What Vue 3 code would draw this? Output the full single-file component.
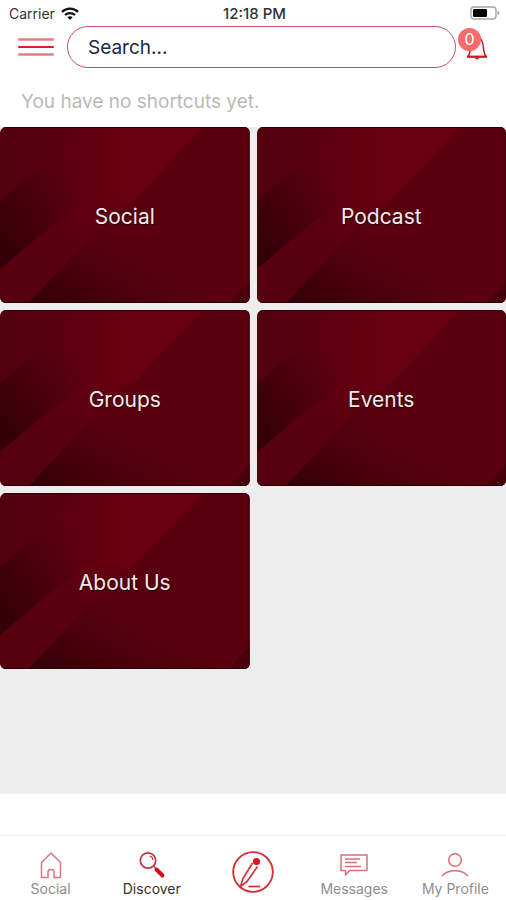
<script setup>
import { ref } from 'vue'

const query = ref('')
const tiles = ['Social', 'Podcast', 'Groups', 'Events', 'About Us']
</script>

<template>
  <div class="page">
    <div class="status">
      <span class="carrier">
        Carrier
        <svg class="wifi" viewBox="0 0 18 13" aria-hidden="true">
          <g fill="none" stroke="#111" stroke-width="2.3">
            <path d="M1 4.9C5.4.6 12.6.6 17 4.9" />
            <path d="M4 8c2.8-2.6 7.2-2.6 10 0" />
          </g>
          <path d="M6.4 10.2c1.5-1.3 3.7-1.3 5.2 0L9 13z" fill="#111" />
        </svg>
      </span>
      <span class="clock">12:18 PM</span>
      <svg class="battery" viewBox="0 0 30 14" aria-hidden="true">
        <rect x="1" y="1" width="25" height="12" rx="3" fill="#fff" stroke="#a5a5a5" stroke-width="1.4" />
        <rect x="3" y="3" width="14" height="8" rx="1" fill="#000" />
        <path d="M27.5 4.5c2.4.8 2.4 4.2 0 5z" fill="#a5a5a5" />
      </svg>
    </div>

    <header class="header">
      <button class="menu" type="button" aria-label="Menu">
        <svg viewBox="0 0 36 20" aria-hidden="true">
          <path d="M1 2.500h34M1 17.500h34" stroke="#df7f86" stroke-width="2.300" stroke-linecap="round" />
          <path d="M1 10h34" stroke="#d3232c" stroke-width="2" stroke-linecap="round" />
        </svg>
      </button>
      <input v-model="query" class="search" type="text" placeholder="Search..." aria-label="Search" />
      <button class="alerts" type="button" aria-label="Notifications">
        <svg viewBox="0 0 24 28" aria-hidden="true">
          <path d="M3 23.500h18c-1.500-2-2-4-2.500-8C18 8.500 16 4 12 4S6 8.500 5.500 15.500c-.5 4-1 6-2.500 8z" fill="none" stroke="#cc1822" stroke-width="1.500" stroke-linejoin="round" />
          <path d="M2 23.800h20" stroke="#cc1822" stroke-width="2" />
          <path d="M10 24.500h4c0 2.500-4 2.500-4 0z" fill="#cc1822" />
        </svg>
        <span class="badge">0</span>
      </button>
    </header>

    <p class="hint">You have no shortcuts yet.</p>

    <svg class="defs" width="0" height="0" aria-hidden="true">
      <defs>
        <linearGradient id="tile-base" x1="0" y1="0" x2="1" y2="0">
          <stop offset="0" stop-color="#52000e" />
          <stop offset="0.3" stop-color="#5c000f" />
          <stop offset="1" stop-color="#5c000e" />
        </linearGradient>
        <linearGradient id="tile-shade" gradientUnits="userSpaceOnUse" x1="0" y1="105" x2="78" y2="55">
          <stop offset="0" stop-color="#360009" />
          <stop offset="0.4" stop-color="#46000c" />
          <stop offset="1" stop-color="#5c000f" />
        </linearGradient>
        <linearGradient id="tile-beam" gradientUnits="userSpaceOnUse" x1="0" y1="176" x2="170" y2="0">
          <stop offset="0" stop-color="#54000e" />
          <stop offset="0.45" stop-color="#5c000f" />
          <stop offset="0.8" stop-color="#6a0011" />
          <stop offset="1" stop-color="#640010" />
        </linearGradient>
        <linearGradient id="tile-glow" gradientUnits="userSpaceOnUse" x1="60" y1="60" x2="130" y2="60">
          <stop offset="0" stop-color="#680010" stop-opacity="0" />
          <stop offset="1" stop-color="#680010" />
        </linearGradient>
        <linearGradient id="tile-fold" gradientUnits="userSpaceOnUse" x1="45" y1="185" x2="95" y2="95">
          <stop offset="0" stop-color="#300007" />
          <stop offset="0.45" stop-color="#48000b" />
          <stop offset="1" stop-color="#5b000e" />
        </linearGradient>
      </defs>
    </svg>

    <main class="board">
      <nav class="tiles" aria-label="Sections">
        <a v-for="tile in tiles" :key="tile" class="tile" href="#">
          <svg class="art" viewBox="0 0 250 176" preserveAspectRatio="none" aria-hidden="true">
            <rect width="250" height="176" fill="url(#tile-base)" />
            <path d="M0 74L32 46L80 0H180L60 95L0 142z" fill="url(#tile-shade)" />
            <path d="M60 95V16L80 0H204L135 72z" fill="url(#tile-glow)" />
            <path d="M0 142L60 92L135 72L93 107L29 176H0z" fill="url(#tile-beam)" />
            <path d="M29 176L93 107L135 72L204 0H250V176z" fill="url(#tile-fold)" />
            <path d="M229 176L250 154V176z" fill="#4a000b" />
            <path d="M0 .5H250M0 175.500H250M249.500 0V176" stroke="#2c0007" stroke-width="1" />
          </svg>
          <span class="label">{{ tile }}</span>
        </a>
      </nav>
    </main>

    <nav class="tabs" aria-label="Main">
      <a class="tab" href="#">
        <svg viewBox="0 0 28 28" aria-hidden="true">
          <path d="M4.500 11.500L14 2l9.500 9.500V26.500H17v-5.500c0-3.500-6-3.500-6 0v5.500H4.500z" fill="none" stroke="#dc7680" stroke-width="1.500" stroke-linejoin="round" />
        </svg>
        <span>Social</span>
      </a>
      <a class="tab active" href="#" aria-current="page">
        <svg viewBox="0 0 28 28" aria-hidden="true">
          <circle cx="10" cy="9.500" r="7.700" fill="none" stroke="#c8323c" stroke-width="1.700" />
          <path d="M11.500 5c2 .4 3.200 2 3.200 4" fill="none" stroke="#c8323c" stroke-width="1.200" />
          <path d="M15.500 15l3 3" stroke="#c8323c" stroke-width="1.500" />
          <path d="M18.500 18.500l6 6" stroke="#cf101c" stroke-width="4" stroke-linecap="round" />
        </svg>
        <span>Discover</span>
      </a>
      <a class="tab compose" href="#" aria-label="Compose">
        <svg viewBox="0 0 42 42" aria-hidden="true">
          <circle cx="21" cy="21" r="19.800" fill="none" stroke="#d62a34" stroke-width="1.800" />
          <path d="M20.500 12L11 27.500L8.500 35.500L15 30.500L25.500 15.500" fill="none" stroke="#d3343e" stroke-width="1.700" stroke-linejoin="round" />
          <circle cx="24.500" cy="10.500" r="3.600" fill="#dc1420" />
          <path d="M16.500 35.500h11.500" stroke="#d62a34" stroke-width="1.700" />
        </svg>
      </a>
      <a class="tab" href="#">
        <svg viewBox="0 0 28 28" aria-hidden="true">
          <path d="M1 4h26v15.500H9.500L5.500 24v-4.500H1z" fill="none" stroke="#dc6e78" stroke-width="1.500" stroke-linejoin="round" />
          <path d="M5 8h15M5 11.500h12M5 15.500h16" stroke="#dc6e78" stroke-width="1.300" />
        </svg>
        <span>Messages</span>
      </a>
      <a class="tab" href="#">
        <svg viewBox="0 0 28 28" aria-hidden="true">
          <circle cx="14" cy="9" r="6.300" fill="none" stroke="#dc6e78" stroke-width="1.500" />
          <path d="M1 25C7.500 18 20.500 18 27 25" fill="none" stroke="#dc6e78" stroke-width="1.500" />
        </svg>
        <span>My Profile</span>
      </a>
    </nav>
  </div>
</template>

<style>
body {
  margin: 0;
  background: #fff;
}
</style>

<style scoped>
.page {
  display: flex;
  flex-direction: column;
  min-height: 100vh;
  font-family: Inter, "Liberation Sans", sans-serif;
  background: #fff;
}

.status {
  display: grid;
  grid-template-columns: 1fr auto 1fr;
  align-items: center;
  height: 26px;
  padding: 0 6px 0 9px;
  font-size: 14px;
  color: #333;
}

.carrier {
  display: flex;
  align-items: center;
  gap: 6px;
}

.wifi {
  width: 18px;
  height: 13px;
}

.clock {
  font-size: 15px;
  font-weight: 500;
}

.battery {
  justify-self: end;
  width: 30px;
  height: 14px;
}

.header {
  display: flex;
  align-items: center;
  gap: 13px;
  padding: 0 17px 0 18px;
}

.menu,
.alerts {
  flex: none;
  padding: 0;
  border: 0;
  background: none;
}

.menu svg {
  display: block;
  width: 36px;
  height: 20px;
}

.search {
  flex: 1;
  min-width: 0;
  height: 42px;
  box-sizing: border-box;
  padding: 0 20px;
  border: 1px solid #c9535d;
  border-radius: 21px;
  background: #fff;
  font-family: inherit;
  font-size: 19px;
  color: #1d2649;
}

.search::placeholder {
  color: #1d2649;
  opacity: 1;
}

.alerts {
  position: relative;
  margin-left: -4px;
}

.alerts svg {
  display: block;
  width: 24px;
  height: 28px;
}

.badge {
  position: absolute;
  top: -5px;
  left: -7px;
  width: 23px;
  height: 23px;
  border-radius: 50%;
  background: #fb6a6c;
  font-family: Inter, "Liberation Sans", sans-serif;
  font-size: 16px;
  line-height: 23px;
  text-align: center;
  color: #fff;
}

.hint {
  margin: 0;
  padding: 21px 21px 12px;
  font-size: 19px;
  line-height: 26px;
  color: #b9b9b9;
}

.defs {
  display: block;
}

.board {
  flex: 1;
  margin-bottom: 41px;
  background: #ededed;
}

.tiles {
  display: grid;
  grid-template-columns: 1fr 1fr;
  gap: 7px;
}

.tile {
  display: grid;
  height: 176px;
  overflow: hidden;
  border-radius: 6px;
  text-decoration: none;
}

.art,
.label {
  grid-area: 1 / 1;
}

.art {
  display: block;
  width: 100%;
  height: 176px;
}

.label {
  z-index: 1;
  place-self: center;
  padding-top: 4px;
  font-size: 21px;
  line-height: 26px;
  color: #f4eaea;
  text-shadow: 1px 1px 1px #1c0004;
}

.tabs {
  display: grid;
  grid-template-columns: repeat(5, 1fr);
  height: 65px;
  box-sizing: border-box;
  border-top: 1px solid #f0f0f0;
}

.tab {
  display: flex;
  flex-direction: column;
  align-items: center;
  gap: 1px;
  padding-top: 15px;
  font-size: 14px;
  line-height: 18px;
  color: #8e8e8e;
  text-decoration: none;
}

.tab svg {
  width: 28px;
  height: 28px;
}

.active {
  color: #333;
}

.compose svg {
  width: 42px;
  height: 42px;
}
</style>
